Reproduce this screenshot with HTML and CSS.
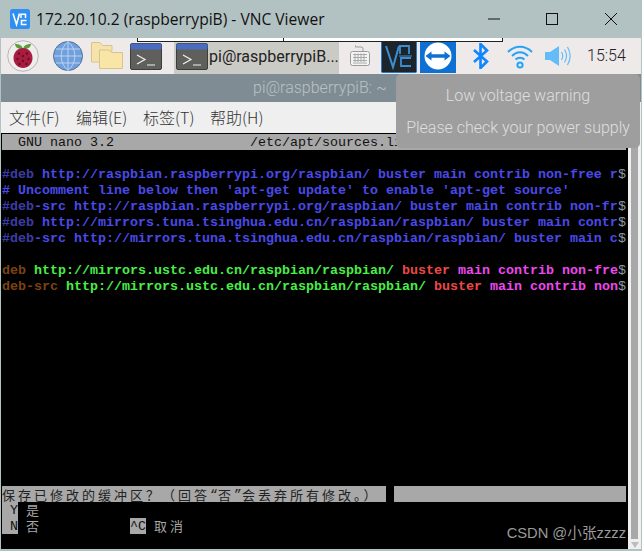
FILE: index.html
```html
<!DOCTYPE html>
<html lang="zh">
<head>
<meta charset="utf-8">
<title>VNC Viewer</title>
<link rel="stylesheet" href="styles.css">
</head>
<body>
<div class="window">
  <header class="titlebar">
    <svg class="app-icon" viewBox="0 0 20 20"><rect width="20" height="20" rx="2.5" fill="#2f8ff2"/><path d="M3 4.5 6.5 15.5 9.5 4.5" fill="none" stroke="#fff" stroke-width="1.6"/><path d="M11 9V5.2h4.5V9M16.5 11.5H11.5V15.5H16.5" fill="none" stroke="#fff" stroke-width="1.5"/></svg>
    <span class="title-text">172.20.10.2 (raspberrypiB) - VNC Viewer</span>
    <div class="win-controls">
      <svg class="win-btn" viewBox="0 0 12 12"><path d="M0 6H12" stroke="#111" stroke-width="1"/></svg>
      <svg class="win-btn" viewBox="0 0 12 12"><rect x=".5" y=".5" width="11" height="11" fill="none" stroke="#111"/></svg>
      <svg class="win-btn" viewBox="0 0 12 12"><path d="M0 0 12 12M12 0 0 12" stroke="#111"/></svg>
    </div>
  </header>
  <div class="remote">
    <nav class="panel">
      <div class="strip"><i></i></div>
      <svg class="ic-rasp" viewBox="0 0 32 32">
        <circle cx="16" cy="16" r="15.3" fill="#efeeee" stroke="#b5b5b5" stroke-width="1"/>
        <path d="M15 9C11 9 8 7 8 4 12 4 15 5 15.700 8.500ZM17 9C21 9 24 7 24 4 20 4 17 5 16.300 8.500Z" fill="#5f9c3a"/>
        <path d="M16 8C21 8 25.500 12 25.500 18 25.500 24 21 28 16 28 11 28 6.500 24 6.500 18 6.500 12 11 8 16 8Z" fill="#a81c40"/>
        <g fill="#6e0a24"><circle cx="12" cy="13.500" r="1.200"/><circle cx="20" cy="13.500" r="1.200"/><circle cx="16" cy="16" r="1.200"/><circle cx="10.500" cy="19" r="1.200"/><circle cx="21.500" cy="19" r="1.200"/><circle cx="16" cy="21" r="1.200"/><circle cx="12.500" cy="24" r="1.200"/><circle cx="19.500" cy="24" r="1.200"/></g>
      </svg>
      <svg class="ic-globe" viewBox="0 0 30 30">
        <circle cx="15" cy="15" r="14.500" fill="#6f9fdc" stroke="#5272a0"/>
        <path d="M1 15H29M3 8H27M3 22H27M15 .5V29.500M15 .5C6 8 6 22 15 29.500M15 .5C24 8 24 22 15 29.500" fill="none" stroke="#c3d8f2" stroke-width=".9"/>
      </svg>
      <svg class="ic-folder" viewBox="0 0 32 28">
        <path d="M.5 .5H9L11.500 3.500H21V9H9V20H.5Z" fill="#f6e3ab" stroke="#d7c48c"/>
        <path d="M8.500 8H18L20.500 10.500H31.500V26.500H8.500Z" fill="#f9e5a6" stroke="#d7c48c"/>
      </svg>
      <svg class="ic-term" viewBox="0 0 32 27"><use href="#termshape"/></svg>
      <div class="task">
        <svg class="ic-term" viewBox="0 0 32 27">
          <g id="termshape">
            <rect x=".5" y=".5" width="31" height="26" rx="1.500" fill="#5f5f5c" stroke="#3d3d3d"/>
            <rect x=".5" y=".5" width="31" height="6" rx="1" fill="#4a6cc0"/>
            <path d="M7 12 15 16.500 7 21M17 22H25" fill="none" stroke="#f2f2f2" stroke-width="1.200"/>
          </g>
        </svg>
        <span class="task-label">pi@raspberrypiB...</span>
      </div>
      <svg class="ic-kbd" viewBox="0 0 20 22">
        <path d="M13 6V3.500C13 2 11.500 2 10 2H5.500V.5" fill="none" stroke="#9a9a9a"/>
        <rect x=".5" y="6.500" width="19" height="14" rx="2" fill="#f4f4f4" stroke="#9a9a9a"/>
        <path d="M3 9.500H17M3 12.500H17M3 15.500H17M3 18H17M5 8.500V17M8 8.500V17M11 8.500V17M14 8.500V17" stroke="#a8a8a8" fill="none"/>
      </svg>
      <svg class="ic-vnc" viewBox="0 0 36 32">
        <rect x=".5" y=".5" width="35" height="31" rx="1" fill="#1c2529" stroke="#2378d2"/>
        <path d="M5 5 12 26 18 5" fill="none" stroke="#3f8dd0" stroke-width="2"/>
        <path d="M19 13V5H28V13" fill="none" stroke="#3f8dd0" stroke-width="1.800"/>
        <path d="M30 17H20V25H30" fill="none" stroke="#3f8dd0" stroke-width="1.800"/>
        <path d="M18 15H31" stroke="#3f8dd0" stroke-width="1"/>
      </svg>
      <svg class="ic-tv" viewBox="0 0 36 32">
        <rect width="36" height="32" fill="#0e70d2"/>
        <circle cx="18" cy="15" r="13.500" fill="#fff"/>
        <path d="M5.500 15 11.500 10.500V13.300H24.500V10.500L30.500 15 24.500 19.500V16.700H11.500V19.500Z" fill="#0e70d2"/>
      </svg>
      <svg class="ic-bt" viewBox="0 0 16 26"><path d="M1 7 14 18.500 7.500 25V1L14 7.500 1 19" fill="none" stroke="#0f85ff" stroke-width="2.600"/></svg>
      <svg class="ic-wifi" viewBox="0 0 26 26">
        <path d="M1 9C8 2 18 2 25 9M5 13C10 8 16 8 21 13M8.500 16.500C11 14 15 14 17.500 16.500" fill="none" stroke="#27a4f7" stroke-width="2"/>
        <circle cx="13" cy="22" r="2.600" fill="none" stroke="#27a4f7" stroke-width="2"/>
      </svg>
      <svg class="ic-sound" viewBox="0 0 26 22">
        <path d="M0 7H5L14 1V21L5 15H0Z" fill="#63bcf8"/>
        <path d="M16.500 7C18 9.500 18 12.500 16.500 15M19.500 4.500C22 8.500 22 13.500 19.500 17.500M22.500 2C26 8 26 14 22.500 20" fill="none" stroke="#63bcf8" stroke-width="1.200"/>
      </svg>
      <span class="clock">15:54</span>
    </nav>
    <div class="lx-title">pi@raspberrypiB: ~</div>
    <div class="menubar">
      <span class="menu">文件(F)</span>
      <span class="menu">编辑(E)</span>
      <span class="menu">标签(T)</span>
      <span class="menu">帮助(H)</span>
    </div>
    <div class="term-wrap">
      <main class="terminal">
<div class="row header">  GNU nano 3.2                 /etc/apt/sources.list</div>
<div class="row"></div>
<div class="row b blue"><span class="dim">#deb</span> http://raspbian.raspberrypi.org/raspbian/ buster main contrib non-free r<span class="more">$</span></div>
<div class="row b blue"># Uncomment line below then 'apt-get update' to enable 'apt-get source'</div>
<div class="row b blue"><span class="dim">#deb</span>-src http://raspbian.raspberrypi.org/raspbian/ buster main contrib non-fr<span class="more">$</span></div>
<div class="row b blue"><span class="dim">#deb</span> http://mirrors.tuna.tsinghua.edu.cn/raspbian/raspbian/ buster main contr<span class="more">$</span></div>
<div class="row b blue"><span class="dim">#deb</span>-src http://mirrors.tuna.tsinghua.edu.cn/raspbian/raspbian/ buster main c<span class="more">$</span></div>
<div class="row"></div>
<div class="row b"><span class="brown">deb</span> <span class="green">http://mirrors.ustc.edu.cn/raspbian/raspbian/</span> <span class="red">buster</span> <span class="pink">main contrib non-fre</span><span class="more">$</span></div>
<div class="row b"><span class="brown">deb-src</span> <span class="green">http://mirrors.ustc.edu.cn/raspbian/raspbian/</span> <span class="red">buster</span> <span class="pink">main contrib non</span><span class="more">$</span></div>
<div class="spacer"></div>
<div class="row status"><span class="inv cjk status-main">保存已修改的缓冲区？（回答<span class="narrow">“</span>否<span class="narrow">”</span>会丢弃所有修改。）</span><span class="inv status-fill"></span></div>
<div class="row"><span class="inv"> Y</span> <span class="cjk">是</span></div>
<div class="row"><span class="inv"> N</span> <span class="cjk">否</span>           <span class="inv">^C</span> <span class="cjk">取消</span></div>
<div class="row last"></div>
      </main>
      <aside class="scrollbar">
        <div class="thumb"></div>
        <svg class="arrow" viewBox="0 0 8 6"><path d="M0 0H8L4 6Z" fill="#bcbcbc"/></svg>
      </aside>
    </div>
    <div class="notice">
      <p>Low voltage warning</p>
      <p>Please check your power supply</p>
    </div>
    <div class="watermark">CSDN @小张zzzz</div>
  </div>
</div>
</body>
</html>
```
FILE: styles.css
```css
* { box-sizing: border-box; }
html, body { margin: 0; padding: 0; }
body { width: 642px; height: 551px; overflow: hidden; background: #b2c2c2; }
.window { display: flex; flex-direction: column; height: 551px; }

.titlebar { flex: 0 0 38px; display: flex; align-items: center; padding-left: 10px; }
.app-icon { width: 20px; height: 20px; margin-top: 0; }
.title-text { margin-left: 6px; font: 15.6px "Open Sans", "Noto Sans", sans-serif; color: #111; white-space: nowrap; }
.win-controls { margin-left: auto; display: flex; align-items: center; padding-right: 25px; gap: 46px; }
.win-btn { width: 12px; height: 12px; }
.win-btn:last-child { margin-left: 1px; }

.remote { position: relative; flex: 1; margin: 0 1px 2px 1px; display: flex; flex-direction: column; min-height: 0; }

.panel { position: relative; flex: 0 0 36px; display: flex; align-items: flex-end; padding-left: 6px; background: #eeeaea; }
.strip { position: absolute; left: 136px; top: 0; width: 366px; height: 4px; background: #fff; border: 1px solid #222; border-top: 0; }
.strip i { display: block; width: 1px; height: 3px; margin-left: 145px; background: #222; }
.panel svg { flex: none; display: block; }
.ic-rasp { width: 32px; height: 32px; margin-bottom: 2px; }
.ic-globe { width: 30px; height: 30px; margin: 0 0 3px 14px; }
.ic-folder { width: 32px; height: 28px; margin: 0 0 4px 8px; }
.ic-term { width: 32px; height: 27px; margin: 0 0 4px 7px; }
.task { display: flex; align-items: center; align-self: stretch; margin-left: 12px; width: 165px; padding-left: 2px; margin-top: 0; background: #cbcbc6; overflow: hidden; }
.task .ic-term { margin: 0; }
.task-label { margin-left: 1px; font: 16px Roboto, sans-serif; color: #222; white-space: nowrap; }
.ic-kbd { width: 20px; height: 22px; margin: 0 0 7px 11px; }
.ic-vnc { width: 36px; height: 32px; margin: 0 0 1px 11px; }
.ic-tv { width: 36px; height: 32px; margin: 0 0 1px 3px; }
.ic-bt { width: 16px; height: 26px; margin: 0 0 5px 17px; }
.ic-wifi { width: 26px; height: 26px; margin: 0 0 5px 18px; }
.ic-sound { width: 26px; height: 22px; margin: 0 0 7px 12px; }
.clock { margin: 0 0 6px 16px; font: 300 16px/24px Roboto, sans-serif; color: #222; }

.lx-title { flex: 0 0 28px; padding-left: 252px; background: #7f8c93; color: #b9c2c6; font: 300 16px/28px Roboto, sans-serif; white-space: nowrap; }

.menubar { flex: 0 0 31px; display: flex; gap: 16px; padding-left: 8px; background: #efefef; }
.menu { width: 51px; font: 300 16px/31px "Noto Sans CJK SC", sans-serif; color: #333; white-space: nowrap; }

.term-wrap { flex: 1; display: flex; min-height: 0; }
.terminal { flex: 1; display: flex; flex-direction: column; padding: 1px 2px 0 1px; background: #000; color: #a8a8a8; font: 13.333px/18px "Liberation Mono", monospace; white-space: pre; min-width: 0; overflow: hidden; }
.row { flex: 0 0 16px; height: 16px; }
.row.last { flex-basis: 15px; height: 15px; }
.spacer { flex: 1; }
.b { font-weight: 700; }
.header { background: #a8a8a8; color: #111; }
.inv { display: inline-block; height: 16px; vertical-align: top; background: #a8a8a8; color: #111; }
.blue { color: #4a4ae8; }
.dim { color: #3c3ca6; }
.more { color: #8f9aa6; font-weight: 400; }
.brown { color: #7c4312; }
.green { color: #48ee48; }
.red { color: #ee4848; }
.pink { color: #ee48ee; }
.cjk { display: inline-block; height: 16px; vertical-align: top; line-height: 16px; font-family: "Noto Sans CJK SC", sans-serif; font-size: 13px; letter-spacing: 3px; }
.narrow { display: inline-block; width: 8px; height: 16px; vertical-align: top; letter-spacing: 0; font-family: "Liberation Mono", monospace; }
.status { display: flex; gap: 8px; }
.status-main { flex: 0 0 384px; color: #222; line-height: 18px; }
.status-fill { flex: 1; }

.scrollbar { flex: 0 0 13px; display: flex; flex-direction: column; align-items: center; padding: 0 0 1px; background: #efefef; }
.thumb { flex: 1; width: 7px; background: #a8a8a8; margin-bottom: 3px; }
.arrow { width: 8px; height: 6px; flex: none; }

.notice { position: absolute; left: 395px; top: 36px; width: 244px; height: 74px; border-radius: 5px; background: #9e9e9e; color: #dedede; font: 300 16px/32px Roboto, sans-serif; text-align: center; padding-top: 6px; white-space: nowrap; }
.notice p { margin: 0; }

.watermark { position: absolute; right: 15px; bottom: 7px; font: 14.700px/18px "Liberation Sans", "Noto Sans CJK SC", sans-serif; color: #9a9a9a; white-space: nowrap; }
```
